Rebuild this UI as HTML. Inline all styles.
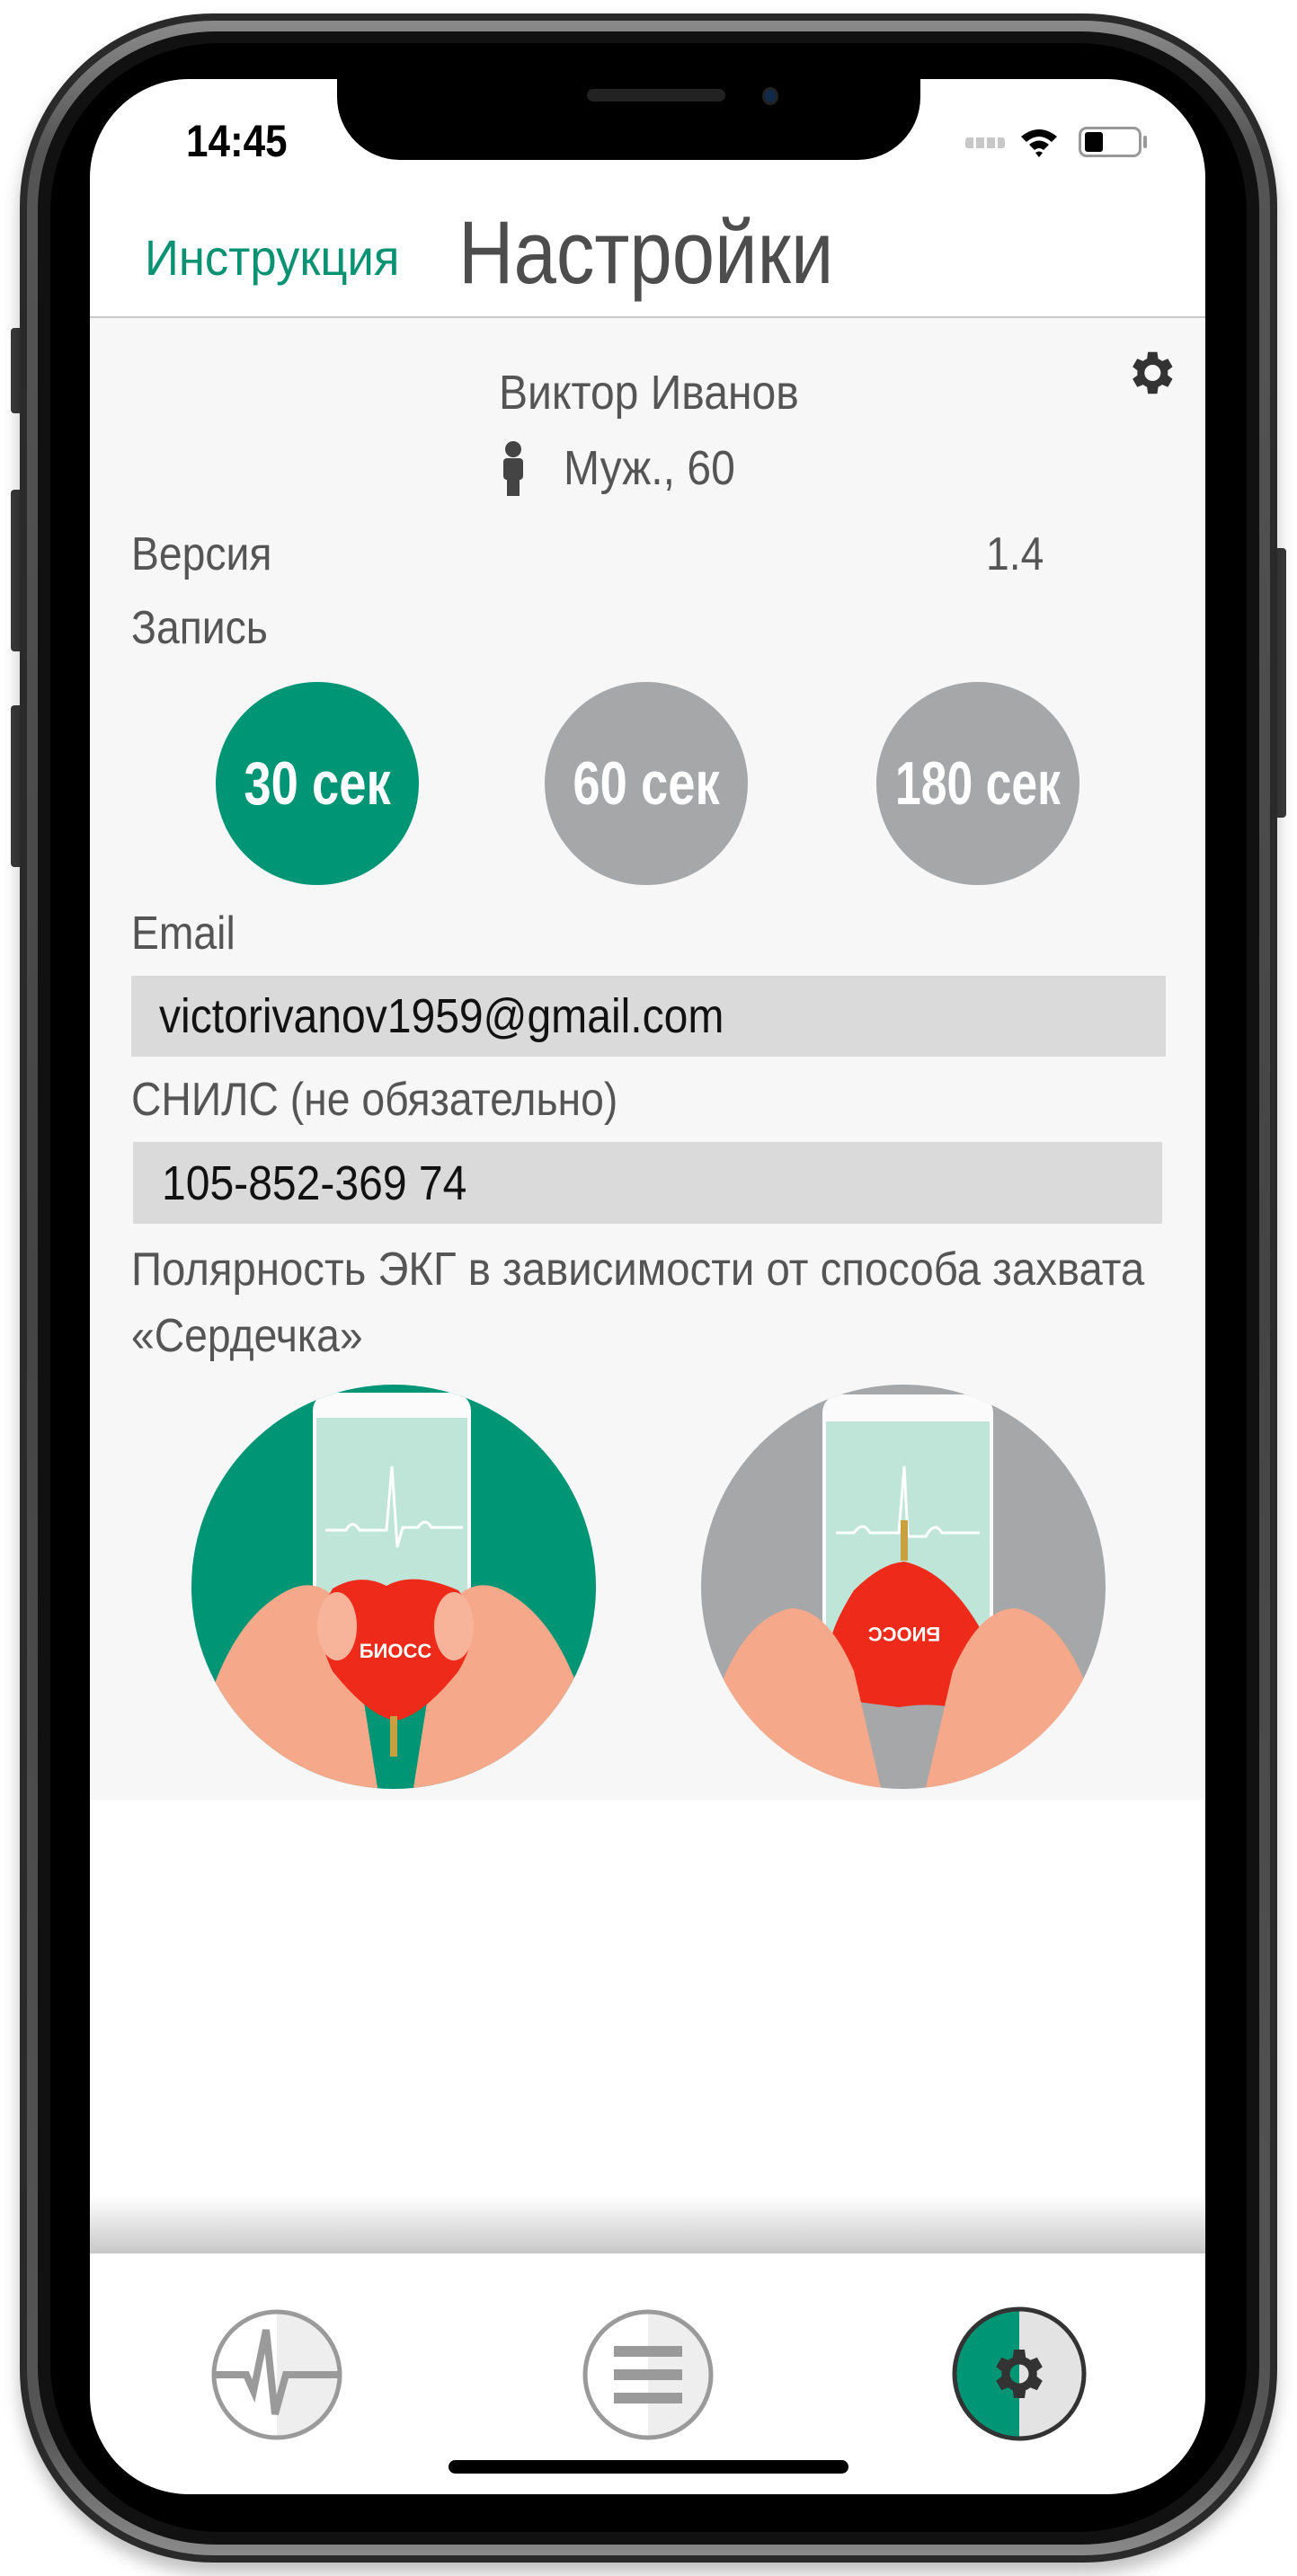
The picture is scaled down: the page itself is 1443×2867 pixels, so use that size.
<!DOCTYPE html>
<html><head><meta charset="utf-8">
<style>
*{margin:0;padding:0;box-sizing:border-box}
body{width:1443px;height:2867px;background:#fff;position:relative;overflow:hidden;font-family:"Liberation Sans",sans-serif}
.abs{position:absolute}
.t{position:absolute;white-space:nowrap;color:#555;transform:scaleX(.89);transform-origin:0 0}
.c{position:absolute;border-radius:50%;color:#fff;font-size:68px;font-weight:bold;width:226px;height:226px;display:flex;align-items:center;justify-content:center;white-space:nowrap}
.c span{display:inline-block;transform:scaleX(.8);flex:none}
</style></head><body>
<div class="abs" style="left:12px;top:365px;width:14px;height:95px;background:#3a3a3a;border-radius:4px"></div>
<div class="abs" style="left:12px;top:545px;width:14px;height:180px;background:#3a3a3a;border-radius:4px"></div>
<div class="abs" style="left:12px;top:785px;width:14px;height:180px;background:#3a3a3a;border-radius:4px"></div>
<div class="abs" style="left:1417px;top:610px;width:14px;height:300px;background:#3a3a3a;border-radius:4px"></div>
<div class="abs" style="left:22px;top:15px;width:1399px;height:2837px;border-radius:215px;background:#2a2a2a;box-shadow:0 12px 18px rgba(0,0,0,.25)"></div>
<div class="abs" style="left:30px;top:23px;width:1383px;height:2821px;border-radius:208px;background:linear-gradient(#8a8a8a,#555 5%,#444 50%,#555 95%,#8a8a8a)"></div>
<div class="abs" style="left:42px;top:35px;width:1359px;height:2797px;border-radius:198px;background:#111"></div>
<div class="abs" style="left:56px;top:48px;width:1331px;height:2770px;border-radius:188px;background:#000"></div>
<div class="abs" style="left:100px;top:88px;width:1241px;height:2688px;border-radius:110px;background:#fff;overflow:hidden">
  <div class="abs" style="left:0;top:265px;width:1241px;height:1650px;background:#f7f7f7"></div>
  <div class="abs" style="left:0;top:264px;width:1241px;height:2px;background:#c8c8c8"></div>
  <div class="abs" style="left:0;top:2355px;width:1241px;height:65px;background:linear-gradient(#fff,#c8c8c8)"></div>
</div>
<div class="abs" style="left:375px;top:80px;width:649px;height:98px;background:#000;border-radius:0 0 70px 70px"></div>
<div class="abs" style="left:653px;top:99px;width:154px;height:14px;background:#222;border-radius:7px"></div>
<div class="abs" style="left:848px;top:97px;width:18px;height:20px;background:#0f2a4a;border-radius:50%;border:3px solid #222"></div>
<div class="t" style="left:207px;top:128px;font-size:50px;font-weight:bold;color:#000;transform:scaleX(.88)">14:45</div>
<div class="abs" style="left:1074px;top:153px;width:44px;height:12px;background:repeating-linear-gradient(90deg,#c8c8c8 0 9px,transparent 9px 12px);border-radius:3px"></div>
<svg class="abs" style="left:1134px;top:140px" width="44" height="36" viewBox="0 0 44 36"><path d="M2 12 Q22 -4 42 12 L36 18 Q22 6 8 18Z M11 21 Q22 12 33 21 L27 27 Q22 23 17 27Z M22 35 L18 30 Q22 27 26 30Z" fill="#000"/></svg>
<div class="abs" style="left:1200px;top:141px;width:70px;height:34px;border:3px solid #999;border-radius:9px"></div>
<div class="abs" style="left:1207px;top:147px;width:20px;height:22px;background:#000;border-radius:3px"></div>
<div class="abs" style="left:1272px;top:151px;width:4px;height:14px;background:#999;border-radius:2px"></div>
<div class="t" style="left:161px;top:254px;font-size:56px;color:#0a9272;transform:scaleX(.94)">Инструкция</div>
<div class="t" style="left:510px;top:224px;font-size:99px;color:#4d4d4d;transform:scaleX(.86)">Настройки</div>
<svg class="abs" style="left:1249px;top:384px" width="62" height="62" viewBox="0 0 24 24"><path fill="#333" d="M19.4 13a7.5 7.5 0 0 0 0-2l2.1-1.6-2-3.5-2.5 1a7.4 7.4 0 0 0-1.7-1L14.9 3h-4l-.4 2.9a7.4 7.4 0 0 0-1.7 1l-2.5-1-2 3.5L6.4 11a7.5 7.5 0 0 0 0 2l-2.1 1.6 2 3.5 2.5-1a7.4 7.4 0 0 0 1.7 1l.4 2.9h4l.4-2.9a7.4 7.4 0 0 0 1.7-1l2.5 1 2-3.5zM12.9 15.5a3.5 3.5 0 1 1 0-7 3.5 3.5 0 0 1 0 7z"/></svg>
<div class="t" style="left:555px;top:406px;font-size:54px">Виктор Иванов</div>
<svg class="abs" style="left:556px;top:490px" width="30" height="62" viewBox="0 0 30 62"><circle cx="15" cy="10" r="9" fill="#444"/><rect x="4" y="20" width="22" height="24" rx="4" fill="#444"/><rect x="8" y="40" width="14" height="22" fill="#444"/></svg>
<div class="t" style="left:627px;top:490px;font-size:54px">Муж., 60</div>
<div class="t" style="left:146px;top:587px;font-size:52px">Версия</div>
<div class="t" style="left:1097px;top:587px;font-size:52px">1.4</div>
<div class="t" style="left:146px;top:669px;font-size:52px">Запись</div>
<div class="c" style="left:240px;top:759px;background:#009575"><span>30 сек</span></div>
<div class="c" style="left:606px;top:759px;background:#a5a7a9"><span>60 сек</span></div>
<div class="c" style="left:975px;top:759px;background:#a5a7a9"><span style="transform:scaleX(.76)">180 сек</span></div>
<div class="t" style="left:146px;top:1009px;font-size:52px">Email</div>
<div class="abs" style="left:146px;top:1086px;width:1151px;height:90px;background:#dadada"></div>
<div class="t" style="left:177px;top:1100px;font-size:54px;color:#111">victorivanov1959@gmail.com</div>
<div class="t" style="left:146px;top:1194px;font-size:52px">СНИЛС (не обязательно)</div>
<div class="abs" style="left:148px;top:1271px;width:1145px;height:91px;background:#dadada"></div>
<div class="t" style="left:180px;top:1286px;font-size:54px;color:#111">105-852-369 74</div>
<div class="t" style="left:146px;top:1383px;font-size:52px;transform:scaleX(.91)">Полярность ЭКГ в зависимости от способа захвата</div>
<div class="t" style="left:146px;top:1457px;font-size:52px">«Сердечка»</div>
<svg class="abs" style="left:200px;top:1530px" width="1050" height="480" viewBox="200 1530 1050 480">
 <defs>
  <clipPath id="c1"><circle cx="438" cy="1766" r="225"/></clipPath>
  <clipPath id="c2"><circle cx="1005" cy="1766" r="225"/></clipPath>
 </defs>
 <g clip-path="url(#c1)">
  <rect x="200" y="1530" width="500" height="480" fill="#009575"/>
  <rect x="348" y="1550" width="176" height="260" rx="20" fill="#fbfbfb"/>
  <rect x="352" y="1578" width="168" height="230" fill="#bfe5d9"/>
  <path d="M362 1703 H385 Q392 1690 400 1703 H430 L436 1632 L442 1722 L448 1700 H465 Q473 1688 480 1700 H515" stroke="#fff" stroke-width="3" fill="none"/>
  <path d="M230 1900 Q260 1800 320 1770 Q360 1750 390 1800 L420 1990 H300 Z" fill="#f6a98a"/>
  <path d="M650 1900 Q620 1800 560 1770 Q520 1750 490 1800 L460 1990 H580 Z" fill="#f6a98a"/>
  <path d="M370 1768 Q400 1750 430 1765 Q460 1748 510 1770 Q540 1810 510 1860 Q470 1910 440 1915 Q410 1910 370 1860 Q345 1810 370 1768Z" fill="#ee2a1b"/>
  <text x="440" y="1845" font-size="22" font-weight="bold" fill="#fff" text-anchor="middle" font-family="Liberation Sans,sans-serif">БИОСС</text>
  <rect x="434" y="1910" width="8" height="45" fill="#c9a040"/>
  <ellipse cx="375" cy="1810" rx="22" ry="38" fill="#f7b49a"/>
  <ellipse cx="505" cy="1810" rx="22" ry="38" fill="#f7b49a"/>
 </g>
 <g clip-path="url(#c2)">
  <rect x="760" y="1530" width="500" height="480" fill="#a5a7a9"/>
  <rect x="915" y="1552" width="190" height="270" rx="20" fill="#fbfbfb"/>
  <rect x="919" y="1582" width="182" height="240" fill="#bfe5d9"/>
  <path d="M930 1706 H950 Q960 1692 968 1706 H1000 L1006 1632 L1010 1710 H1030 Q1040 1692 1048 1706 H1090" stroke="#fff" stroke-width="3" fill="none"/>
  <rect x="1002" y="1692" width="8" height="45" fill="#c9a040"/>
  <path d="M1006 1738 Q1060 1750 1100 1830 Q1110 1890 1060 1900 Q1030 1895 1000 1900 Q960 1895 925 1890 Q905 1840 950 1770 Q980 1740 1006 1738Z" fill="#ee2a1b"/>
  <text x="1006" y="1825" font-size="22" font-weight="bold" fill="#fff" text-anchor="middle" font-family="Liberation Sans,sans-serif" transform="rotate(180 1006 1818)">БИОСС</text>
  <path d="M800 1880 Q830 1800 880 1790 Q920 1790 950 1860 L980 1990 H860 Z" fill="#f6a98a"/>
  <path d="M1210 1880 Q1180 1800 1130 1790 Q1090 1790 1060 1860 L1030 1990 H1150 Z" fill="#f6a98a"/>
 </g>
</svg>
<svg class="abs" style="left:234px;top:2569px" width="148" height="148" viewBox="0 0 148 148"><path d="M74 4 A70 70 0 0 1 74 144Z" fill="#eee"/><circle cx="74" cy="74" r="70" fill="none" stroke="#9a9a9a" stroke-width="5"/><path d="M4 74 H40 L48 92 L62 24 L72 118 L84 74 H144" fill="none" stroke="#9a9a9a" stroke-width="8"/></svg>
<svg class="abs" style="left:647px;top:2569px" width="148" height="148" viewBox="0 0 148 148"><path d="M74 4 A70 70 0 0 1 74 144Z" fill="#eee"/><circle cx="74" cy="74" r="70" fill="none" stroke="#9a9a9a" stroke-width="5"/><rect x="36" y="42" width="76" height="12" fill="#9a9a9a"/><rect x="36" y="68" width="76" height="12" fill="#9a9a9a"/><rect x="36" y="94" width="76" height="12" fill="#9a9a9a"/></svg>
<svg class="abs" style="left:1058px;top:2566px" width="152" height="152" viewBox="0 0 152 152"><path d="M76 4 A72 72 0 0 0 76 148Z" fill="#009575"/><path d="M76 4 A72 72 0 0 1 76 148Z" fill="#e3e3e3"/><circle cx="76" cy="76" r="72" fill="none" stroke="#333" stroke-width="5"/><g transform="translate(40 40) scale(3)"><path fill="#333" d="M19.4 13a7.5 7.5 0 0 0 0-2l2.1-1.6-2-3.5-2.5 1a7.4 7.4 0 0 0-1.7-1L14.9 3h-4l-.4 2.9a7.4 7.4 0 0 0-1.7 1l-2.5-1-2 3.5L6.4 11a7.5 7.5 0 0 0 0 2l-2.1 1.6 2 3.5 2.5-1a7.4 7.4 0 0 0 1.7 1l.4 2.9h4l.4-2.9a7.4 7.4 0 0 0 1.7-1l2.5 1 2-3.5zM12.9 15.5a3.5 3.5 0 1 1 0-7 3.5 3.5 0 0 1 0 7z" transform="translate(-0.9 0)"/></g></svg>
<div class="abs" style="left:499px;top:2738px;width:445px;height:15px;background:#000;border-radius:8px"></div>
</body></html>
